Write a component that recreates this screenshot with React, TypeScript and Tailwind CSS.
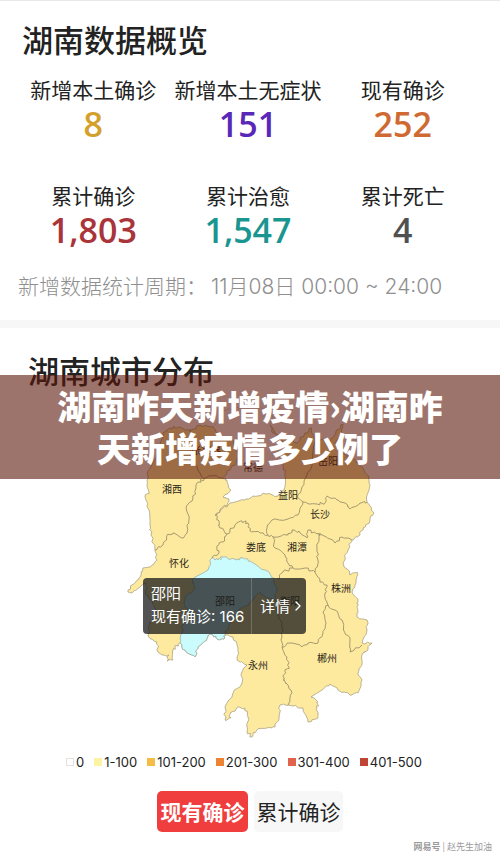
import { ChevronRight } from "lucide-react";

type Point = [number, number];

interface Stat {
  label: string;
  value: string;
  color: string;
}

const stats: Stat[] = [
  { label: "新增本土确诊", value: "8", color: "text-[#d3a12b]" },
  { label: "新增本土无症状", value: "151", color: "text-[#5a28b8]" },
  { label: "现有确诊", value: "252", color: "text-[#cf6a33]" },
  { label: "累计确诊", value: "1,803", color: "text-[#a93439]" },
  { label: "累计治愈", value: "1,547", color: "text-[#199690]" },
  { label: "累计死亡", value: "4", color: "text-[#505050]" },
];

const legend = [
  { label: "0", swatch: "border border-[#e2e2e2] bg-white" },
  { label: "1-100", swatch: "bg-[#fdf3a4]" },
  { label: "101-200", swatch: "bg-[#f5bd45]" },
  { label: "201-300", swatch: "bg-[#ec8433]" },
  { label: "301-400", swatch: "bg-[#e0634d]" },
  { label: "401-500", swatch: "bg-[#bf4433]" },
];

const cities = [
  { name: "张家界", x: 206, y: 454 },
  { name: "常德", x: 253, y: 471 },
  { name: "岳阳", x: 328, y: 465 },
  { name: "湘西", x: 172, y: 493 },
  { name: "益阳", x: 288, y: 499 },
  { name: "长沙", x: 320, y: 518 },
  { name: "娄底", x: 256, y: 551 },
  { name: "湘潭", x: 297, y: 551 },
  { name: "怀化", x: 179, y: 567 },
  { name: "株洲", x: 341, y: 592 },
  { name: "邵阳", x: 225, y: 605 },
  { name: "衡阳", x: 290, y: 605 },
  { name: "郴州", x: 327, y: 662 },
  { name: "永州", x: 258, y: 669 },
];

// province without 常德, which has no cases and stays white
const province: Point[] = [
  [163, 433], [170, 428], [178, 427], [190, 430], [200, 425], [213, 427], [220, 437], [233, 440], [240, 457], [230, 470], [222, 478],
  [227, 480], [231, 490], [223, 497], [229, 499], [227, 507], [220, 510], [215, 515], [220, 510], [230, 503], [245, 500], [253, 496],
  [267, 494], [278, 496], [284, 490], [285, 473], [283, 465], [285, 452], [282, 438], [272, 432], [270, 425], [277, 435], [290, 438],
  [297, 443], [305, 433], [312, 428], [313, 435], [315, 442], [322, 439], [330, 442], [336, 431], [343, 424], [342, 435], [335, 443],
  [340, 452], [353, 458], [363, 468], [369, 480], [369, 490], [367, 502], [374, 513], [370, 520], [363, 528], [360, 535], [352, 540],
  [348, 550], [343, 563], [350, 575], [357, 572], [356, 583], [352, 592], [358, 600], [357, 607], [357, 617], [367, 620], [367, 630],
  [362, 643], [372, 643], [368, 649], [363, 653], [362, 664], [358, 673], [362, 680], [358, 693], [350, 695], [338, 690], [330, 684],
  [322, 690], [311, 697], [318, 702], [317, 708], [318, 718], [308, 722], [303, 708], [288, 705], [280, 705], [279, 718], [275, 727],
  [267, 728], [257, 730], [252, 737], [247, 732], [248, 717], [245, 708], [238, 707], [230, 713], [230, 718], [225, 720], [225, 707],
  [233, 693], [242, 683], [242, 672], [247, 665], [237, 660], [238, 648], [233, 637], [225, 635], [224, 639], [217, 639], [213, 635],
  [208, 635], [207, 640], [198, 647], [195, 657], [192, 655], [185, 650], [180, 643], [175, 647], [173, 652], [173, 660], [167, 661],
  [169, 655], [162, 655], [158, 652], [157, 642], [148, 636], [150, 622], [156, 612], [152, 600], [146, 595], [146, 583], [140, 587],
  [132, 593], [128, 590], [135, 583], [140, 577], [143, 568], [152, 565], [157, 560], [155, 550], [151, 535], [150, 525], [149, 510],
  [145, 497], [149, 492], [147, 480], [149, 470], [156, 458], [160, 445], [163, 433],
];

const shaoyang: Point[] = [
  [212, 558], [218, 560], [223, 557], [237, 560], [243, 558], [250, 561], [260, 568], [270, 574], [274, 580], [277, 590], [275, 600],
  [267, 598], [260, 592], [250, 602], [238, 612], [230, 623], [225, 635], [224, 639], [217, 639], [213, 635], [208, 635], [207, 640],
  [198, 647], [195, 657], [192, 655], [185, 650], [180, 643], [182, 633], [183, 625], [190, 617], [185, 607], [185, 597], [195, 588],
  [192, 580], [208, 570], [212, 558],
];

const borders: Point[][] = [
  [[190, 430], [196, 440], [190, 452], [192, 462], [200, 473], [204, 479], [199, 482], [196, 488], [193, 498], [186, 508], [189, 519], [187, 533], [182, 538], [173, 533], [168, 534], [163, 545], [155, 550]],
  [[204, 479], [212, 476], [222, 478]],
  [[315, 442], [313, 462], [307, 475], [302, 487], [297, 497], [303, 502]],
  [[303, 502], [317, 504], [325, 503], [327, 496], [337, 500], [345, 503], [350, 509], [360, 503], [367, 502]],
  [[303, 502], [298, 515], [288, 519], [272, 520], [267, 528], [268, 535]],
  [[215, 515], [218, 520], [220, 528], [227, 534], [235, 525], [242, 521], [248, 523], [250, 531], [260, 533], [268, 535], [273, 537]],
  [[273, 537], [288, 535], [292, 530], [300, 533], [307, 538], [308, 530], [317, 534], [322, 535], [335, 543], [342, 537], [352, 540]],
  [[227, 534], [223, 542], [217, 546], [219, 553], [212, 558]],
  [[273, 537], [275, 548], [285, 555], [287, 562], [293, 568], [283, 572], [277, 579]],
  [[293, 568], [305, 568], [315, 572], [318, 560], [317, 548], [319, 534]],
  [[315, 572], [320, 582], [327, 585], [325, 593], [328, 605], [335, 610], [342, 620], [345, 633], [350, 640], [350, 652], [362, 645]],
  [[328, 605], [323, 612], [326, 623], [323, 633], [318, 643], [308, 643], [302, 647], [290, 643], [282, 647]],
  [[275, 600], [278, 613], [282, 623], [282, 637], [282, 647], [287, 657], [289, 667], [285, 672], [283, 680], [288, 685], [292, 693], [288, 705]],
];

const changdeTop: Point[] = [
  [213, 427], [222, 412], [236, 407], [250, 411], [262, 408], [272, 415], [270, 425],
];

// Splits every segment and nudges the new points, so borders look surveyed.
// The nudge depends on position only, so shared borders stay together.
function roughen(points: Point[]): string {
  const out: Point[] = [];
  points.forEach(([x, y], i) => {
    out.push([x, y]);
    const next = points[i + 1];
    if (!next) return;
    for (const t of [0.25, 0.5, 0.75]) {
      const px = x + (next[0] - x) * t;
      const py = y + (next[1] - y) * t;
      out.push([px + Math.sin(px * 5 + py * 3) * 1.1, py + Math.cos(px * 4 - py * 6) * 1.1]);
    }
  });
  return out.map(([x, y]) => `${x.toFixed(1)},${y.toFixed(1)}`).join(" ");
}

function StatCell({ label, value, color }: Stat) {
  return (
    <div className="text-center">
      <dt className="text-[21px] leading-[26px] whitespace-nowrap">{label}</dt>
      <dd className={`font-['Open_Sans',sans-serif] text-[34px] leading-[44px] font-semibold ${color}`}>{value}</dd>
    </div>
  );
}

function ProvinceMap() {
  return (
    <svg viewBox="100 400 300 345" className="block w-[300px]" role="img" aria-label="湖南城市分布">
      <polyline points={roughen(changdeTop)} fill="none" stroke="#c9c9c9" strokeWidth="0.6" />
      <polygon points={roughen(province)} fill="#feea9f" stroke="#a9a283" strokeWidth="0.8" />
      <polygon points={roughen(shaoyang)} fill="#cbfcfd" stroke="#9fb0a6" strokeWidth="0.8" />
      {borders.map((line, i) => (
        <polyline key={i} points={roughen(line)} fill="none" stroke="#8f8763" strokeWidth="0.8" />
      ))}
      {cities.map((c) => (
        <text key={c.name} x={c.x} y={c.y} textAnchor="middle" fontSize="10" fill="#2b2718">
          {c.name}
        </text>
      ))}
    </svg>
  );
}

export default function App() {
  return (
    <main className="border-t border-[#e8e8e8] bg-white font-['Noto_Sans_CJK_SC',sans-serif] text-[#222]">
      <section className="pt-[14px] pb-[18px]">
        <h1 className="pl-[22px] text-[31px] leading-[48px] font-medium">湖南数据概览</h1>
        <dl className="mt-[13px] grid grid-cols-3 gap-y-9 pr-5 pl-4">
          {stats.map((s) => (
            <StatCell key={s.label} {...s} />
          ))}
        </dl>
        <p className="mt-[18px] flex items-baseline gap-1 pl-[18px] text-[21px] leading-[30px] font-light whitespace-nowrap text-[#8f8f8f]">
          <span>新增数据统计周期：</span>
          <span className="font-['Inter','Noto_Sans_CJK_SC',sans-serif]">11月08日 00:00 ~ 24:00</span>
        </p>
      </section>

      <div className="h-2 bg-[#f7f7f7]" />

      <section className="relative pt-[18px]">
        <h2 className="pl-7 text-[31px] leading-[48px] font-medium">湖南城市分布</h2>

        <div className="relative mx-auto mt-[6px] w-[300px]">
          <ProvinceMap />
          <div className="absolute top-[178px] left-[43px] flex h-14 w-[163px] rounded-sm bg-[#1a1a1a]/75 font-['Inter','Noto_Sans_CJK_SC',sans-serif] text-[15px] leading-[23px] whitespace-nowrap text-white">
            <div className="w-[109px] border-r border-white/20 py-1 pl-2">
              <div>邵阳</div>
              <div>现有确诊: 166</div>
            </div>
            <button type="button" className="flex flex-1 items-center justify-end">
              详情
              <ChevronRight className="h-4 w-4" strokeWidth={2} />
            </button>
          </div>
        </div>

        <ul className="mt-2 flex justify-center gap-[10px] pr-3 font-['Inter',sans-serif] text-[13px] leading-[18px]">
          {legend.map((l) => (
            <li key={l.label} className="flex items-center gap-[2px]">
              <span className={`h-2 w-2 ${l.swatch}`} />
              {l.label}
            </li>
          ))}
        </ul>

        <div className="mt-5 flex justify-center gap-[6px] text-[21px] leading-[41px]">
          <button type="button" className="w-[91px] rounded-[5px] bg-[#f03e3e] text-center font-bold whitespace-nowrap text-white">
            现有确诊
          </button>
          <button type="button" className="w-[89px] rounded-[5px] bg-[#f7f7f7] text-center whitespace-nowrap">
            累计确诊
          </button>
        </div>

        <p className="mt-2 pr-2 text-right text-[9px] leading-[13px] text-[#9a9a9a]">
          <span className="font-bold">网易号</span> | 赵先生加油
        </p>

        <div className="absolute inset-x-0 top-[47px] bg-[#5c170a]/60 px-12 py-[10px] text-center text-[34px] leading-[42px] font-black text-white">
          湖南昨天新增疫情›湖南昨天新增疫情多少例了
        </div>
      </section>
    </main>
  );
}
